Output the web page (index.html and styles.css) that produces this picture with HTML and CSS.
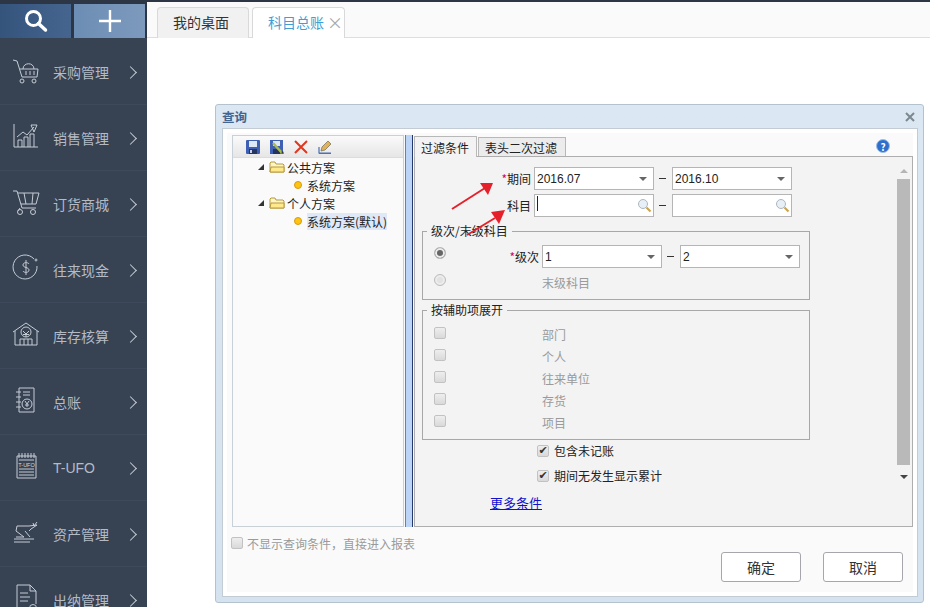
FILE: index.html
```html
<!DOCTYPE html>
<html lang="zh-CN">
<head>
  <meta charset="UTF-8" />
  <title>科目总账</title>
  <link rel="stylesheet" href="styles.css">
</head>
<body>
  <div class="app">
    <aside class="sidebar">
      <div class="quick">
        <div class="quick-btn quick-search">
          <svg width="26" height="26" viewBox="0 0 26 26"><circle cx="10.5" cy="10.5" r="7" fill="none" stroke="#fff" stroke-width="3"/><path d="M15.5 15.5l7 6.5" stroke="#fff" stroke-width="3.5" stroke-linecap="round"/></svg>
        </div>
        <div class="quick-btn quick-add">
          <svg width="24" height="24" viewBox="0 0 24 24"><path d="M12 1v22M1 12h22" stroke="#fff" stroke-width="2.4"/></svg>
        </div>
      </div>
      <ul class="menu">
        <li class="menu-item">
          <svg class="menu-icon" viewBox="0 0 28 28"><path d="M1 4l4 1 5 16h15M8 13h18l-1 8M11 13c0-7 11-7 11 0M14 15v4M18 15v4M22 15v4"/><circle cx="10" cy="25" r="2"/><circle cx="22" cy="25" r="2"/></svg>
          <span class="menu-label">采购管理</span><span class="chevron"></span>
        </li>
        <li class="menu-item">
          <svg class="menu-icon" viewBox="0 0 28 28"><path d="M2 2v23h24M6 25v-7h4v7M12 25v-10h4v10M18 25v-13h4v13M5 15l6-5 4 3 7-8M19 3h6l-3 7z"/></svg>
          <span class="menu-label">销售管理</span><span class="chevron"></span>
        </li>
        <li class="menu-item">
          <svg class="menu-icon" viewBox="0 0 28 28"><path d="M1 3h4l5 17h14M6 5h21l-3 11H9M12 5l2 11M21 5l-1 11M8 20l-2 3"/><circle cx="8" cy="24" r="2.5"/><circle cx="21" cy="24" r="2.5"/></svg>
          <span class="menu-label">订货商城</span><span class="chevron"></span>
        </li>
        <li class="menu-item">
          <svg class="menu-icon" viewBox="0 0 28 28"><path d="M22 5A12 12 0 1 0 25 12M17 10c-1-2-6-2-6 1s6 2 6 5-5 3-6 1M14 6v15"/><circle cx="24" cy="6" r="1"/></svg>
          <span class="menu-label">往来现金</span><span class="chevron"></span>
        </li>
        <li class="menu-item">
          <svg class="menu-icon" viewBox="0 0 28 28"><path d="M1 12L14 3l13 9M3 11v14h22V11M8 25v-6h12v6M12 19v6M16 19v6M11 11l3 3 3-3M14 14v3M11 14.500h6"/><circle cx="14" cy="12" r="5"/></svg>
          <span class="menu-label">库存核算</span><span class="chevron"></span>
        </li>
        <li class="menu-item">
          <svg class="menu-icon" viewBox="0 0 28 28"><path d="M7 2h15v24H7zM4 6h5M4 11h5M4 16h5M4 21h5M11 6h7M11 9h7"/><circle cx="15" cy="18" r="5"/><path d="M13 15l2 3 2-3M15 18v3M13 19h4"/></svg>
          <span class="menu-label">总账</span><span class="chevron"></span>
        </li>
        <li class="menu-item">
          <svg class="menu-icon" viewBox="0 0 28 28"><path d="M5 4h19v22H5zM7 1v5M10 1v5M13 1v5M16 1v5M19 1v5M22 1v5M7 8h15M7 17h15M7 20h15M7 23h15"/><text x="14.500" y="15" class="ufo-mark">T-UFO</text></svg>
          <span class="menu-label">T-UFO</span><span class="chevron"></span>
        </li>
        <li class="menu-item">
          <svg class="menu-icon" viewBox="0 0 28 28"><path d="M2 21h20M2 24h16M5 8h12l8-1-6 4-2 2M5 8l-1 5 8 6H4M13 13l5 6M21 5l1 3M25 4l-3 4"/></svg>
          <span class="menu-label">资产管理</span><span class="chevron"></span>
        </li>
        <li class="menu-item">
          <svg class="menu-icon" viewBox="0 0 28 28"><path d="M5 1h13l6 6v13M18 1v6h6M5 1v24h13M8 9h8M8 13h10M8 17h8"/><circle cx="21" cy="24" r="3.500"/></svg>
          <span class="menu-label">出纳管理</span><span class="chevron"></span>
        </li>
      </ul>
    </aside>

    <main class="main">
      <div class="tabs">
        <div class="tab">我的桌面</div>
        <div class="tab tab-active">科目总账<span class="tab-close">×</span></div>
      </div>
    </main>
  </div>

  <section class="dialog">
    <header class="dialog-title">
      <span>查询</span>
      <svg width="10" height="10" viewBox="0 0 10 10"><path d="M1 1l8 8M9 1l-8 8" stroke="#7d8790" stroke-width="2"/></svg>
    </header>

    <div class="dialog-inner">
      <div class="dialog-body">
        <div class="tree-panel">
          <div class="tree-tools">
            <svg width="14" height="14" viewBox="0 0 14 14"><rect width="14" height="14" rx="1" fill="#3f5fb4"/><rect x="3" y="1" width="8" height="6" fill="#dfe6f4"/><rect x="3" y="9" width="8" height="5" fill="#24345e"/><rect x="4" y="10" width="2" height="3" fill="#c7d0e4"/></svg>
            <svg width="14" height="14" viewBox="0 0 14 14"><rect width="13" height="14" fill="#3f5fb4"/><rect x="3" y="1" width="7" height="5" fill="#dfe6f4"/><rect x="3" y="9" width="7" height="5" fill="#24345e"/><path d="M3 3l9 10" stroke="#a8bb4a" stroke-width="2.500"/><path d="M11 12l3 2-1-3z" fill="#333"/></svg>
            <svg width="14" height="14" viewBox="0 0 14 14"><path d="M1 1l12 12M13 1L1 13" stroke="#e2361f" stroke-width="2"/></svg>
            <svg width="14" height="14" viewBox="0 0 14 14"><path d="M1 7v6h12" fill="none" stroke="#4a6fb0" stroke-width="1.200"/><path d="M1 13.500h12" stroke="#d8452c"/><path d="M3 11l1-4 6-6 3 3-6 6z" fill="#e0b25a" stroke="#6f6a58" stroke-width=".7"/></svg>
          </div>
          <ul class="tree">
            <li class="tree-row tree-group"><span class="tree-arrow"></span>
              <svg width="16" height="14" viewBox="0 0 16 14"><path d="M1 12V3l1-1h4l1 2h7l1 1v7z" fill="#fff6c8" stroke="#b59a3c"/><path d="M1 12l1-5h13v5z" fill="#ffe98a" stroke="#b59a3c"/></svg>
              <span class="tree-text">公共方案</span></li>
            <li class="tree-row tree-leaf"><span class="tree-dot"></span><span class="tree-text">系统方案</span></li>
            <li class="tree-row tree-group"><span class="tree-arrow"></span>
              <svg width="16" height="14" viewBox="0 0 16 14"><path d="M1 12V3l1-1h4l1 2h7l1 1v7z" fill="#fff6c8" stroke="#b59a3c"/><path d="M1 12l1-5h13v5z" fill="#ffe98a" stroke="#b59a3c"/></svg>
              <span class="tree-text">个人方案</span></li>
            <li class="tree-row tree-leaf"><span class="tree-dot"></span><span class="tree-text tree-selected">系统方案(默认)</span></li>
          </ul>
        </div>

        <div class="splitter"></div>

        <div class="filter">
          <div class="filter-tabs">
            <div class="filter-tab filter-tab-active">过滤条件</div>
            <div class="filter-tab">表头二次过滤</div>
            <span class="help">?</span>
          </div>

          <div class="filter-panel">
            <form class="filter-form">
              <div class="field-row">
                <label class="field-label"><em>*</em>期间</label>
                <div class="field">2016.07<span class="caret"></span></div>
                <span class="dash"></span>
                <div class="field">2016.10<span class="caret"></span></div>
              </div>
              <div class="field-row">
                <label class="field-label">科目</label>
                <div class="field"><span class="cursor"></span>
                  <svg class="lookup" width="15" height="15" viewBox="0 0 15 15"><circle cx="6" cy="6" r="4.500" fill="#e8f0f6" stroke="#a9b7c2"/><path d="M9.500 9.500l4 4" stroke="#c9a24a" stroke-width="2"/></svg>
                </div>
                <span class="dash"></span>
                <div class="field">
                  <svg class="lookup" width="15" height="15" viewBox="0 0 15 15"><circle cx="6" cy="6" r="4.500" fill="#e8f0f6" stroke="#a9b7c2"/><path d="M9.500 9.500l4 4" stroke="#c9a24a" stroke-width="2"/></svg>
                </div>
              </div>

              <fieldset class="group group-level">
                <legend>级次/末级科目</legend>
                <div class="level-row">
                  <span class="radio radio-on"></span>
                  <label class="level-label"><em>*</em>级次</label>
                  <div class="field">1<span class="caret"></span></div>
                  <span class="dash"></span>
                  <div class="field">2<span class="caret"></span></div>
                </div>
                <div class="level-row level-last">
                  <span class="radio"></span>
                  <span class="level-label"></span>
                  <span class="muted">末级科目</span>
                </div>
              </fieldset>

              <fieldset class="group group-aux">
                <legend>按辅助项展开</legend>
                <div class="aux-row"><span class="check"></span><span class="muted">部门</span></div>
                <div class="aux-row"><span class="check"></span><span class="muted">个人</span></div>
                <div class="aux-row"><span class="check"></span><span class="muted">往来单位</span></div>
                <div class="aux-row"><span class="check"></span><span class="muted">存货</span></div>
                <div class="aux-row"><span class="check"></span><span class="muted">项目</span></div>
              </fieldset>

              <div class="option"><span class="check check-on">✔</span>包含未记账</div>
              <div class="option"><span class="check check-on">✔</span>期间无发生显示累计</div>
              <a class="more" href="#">更多条件</a>
            </form>

            <div class="scrollbar">
              <span class="scroll-up"></span>
              <span class="scroll-thumb"></span>
              <span class="scroll-down"></span>
            </div>
          </div>
        </div>
      </div>

      <footer class="dialog-foot">
        <div class="skip"><span class="check"></span>不显示查询条件，直接进入报表</div>
        <div class="actions">
          <button class="btn" type="button">确定</button>
          <button class="btn" type="button">取消</button>
        </div>
      </footer>
    </div>

    <svg class="arrows" width="60" height="60" viewBox="0 0 60 60">
      <path d="M1 29L34 8" stroke="#e5202a" stroke-width="2"/>
      <path d="M42 3H29l8 12z" fill="#e5202a"/>
      <path d="M16 55L44 38" stroke="#e5202a" stroke-width="2"/>
      <path d="M54 30L40 32l8 12z" fill="#e5202a"/>
    </svg>
  </section>
</body>
</html>
```
FILE: styles.css
```css
* {
  box-sizing: border-box;
}

html, body {
  margin: 0;
  padding: 0;
  height: 607px;
  overflow: hidden;
  background: #fff;
  font-family: "Noto Sans CJK SC", "Liberation Sans", sans-serif;
  font-size: 12px;
  color: #222;
}

.app {
  display: flex;
  height: 607px;
  border-top: 2px solid #2c3644;
}

/* sidebar */
.sidebar {
  width: 147px;
  flex-shrink: 0;
  background: #374253;
  overflow: hidden;
}

.quick {
  display: flex;
  gap: 3px;
  height: 36px;
  padding-top: 2px;
  background: #2c3644;
}

.quick-btn {
  width: 71px;
  display: flex;
  align-items: center;
  justify-content: center;
}

.quick-search {
  background: linear-gradient(90deg, #35547c, #45658f);
}

.quick-add {
  background: linear-gradient(90deg, #6c8db4, #7d9abd);
}

.menu {
  list-style: none;
  margin: 0;
  padding: 1px 0 0;
}

.menu-item {
  height: 66px;
  display: flex;
  align-items: center;
  padding: 1px 0 0 12px;
  border-bottom: 1px solid #3e4a5c;
  color: #b4bbc5;
  font-size: 14px;
}

.menu-icon {
  width: 28px;
  height: 28px;
  margin: -4px 13px 0 0;
  fill: none;
  stroke: #c5ccd4;
  stroke-width: 1;
}

.ufo-mark {
  font-family: "Liberation Sans", sans-serif;
  font-size: 5.500px;
  fill: #d5dade;
  stroke: none;
  text-anchor: middle;
}

.menu-label {
  width: 73px;
  font-family: "Liberation Sans", "Noto Sans CJK SC", sans-serif;
}

.chevron {
  width: 9px;
  height: 9px;
  border-top: 1px solid #c5ccd4;
  border-right: 1px solid #c5ccd4;
  transform: rotate(45deg);
}

/* tabs */
.main {
  flex: 1;
}

.tabs {
  display: flex;
  gap: 3px;
  height: 36px;
  padding: 5px 0 0 10px;
  background: #fafafa;
  border-bottom: 1px solid #dedede;
  font-size: 14px;
}

.tab {
  width: 92px;
  height: 31px;
  display: flex;
  align-items: center;
  padding: 0 0 3px 15px;
  background: #f1f1f1;
  border: 1px solid #d9d9d9;
  border-bottom: none;
  border-radius: 4px 4px 0 0;
  color: #333;
}

.tab-active {
  width: 93px;
  background: #fff;
  color: #3d9fd6;
}

.tab-close {
  margin-left: 3px;
  color: #a8a8a8;
  font-size: 16px;
  line-height: 1;
}

/* dialog */
.dialog {
  position: absolute;
  left: 215px;
  top: 104px;
  width: 709px;
  height: 499px;
  display: flex;
  flex-direction: column;
  padding: 0 5px 5px 6px;
  background: linear-gradient(#dbe7f2, #d5e3f0);
  border: 1px solid #b4c2ce;
  border-radius: 3px;
}

.dialog-title {
  height: 23px;
  flex-shrink: 0;
  display: flex;
  align-items: center;
  justify-content: space-between;
  padding-right: 3px;
  color: #3f6590;
  font-size: 12.500px;
  font-weight: 700;
}

.dialog-inner {
  flex: 1;
  display: flex;
  flex-direction: column;
  padding: 6px 4px 0 9px;
  background: #fafafa;
  border: 1px solid #c3ccd4;
  box-shadow: inset 0 0 0 4px #fff;
}

.dialog-body {
  display: flex;
  height: 392px;
}

/* tree */
.tree-panel {
  width: 172px;
  flex-shrink: 0;
  background: #fafafa;
  border: 1px solid #c9d1d8;
}

.tree-tools {
  height: 22px;
  display: flex;
  align-items: center;
  gap: 10px;
  padding-left: 13px;
  background: linear-gradient(#fafafa, #e6e6e6);
  border-bottom: 1px solid #dcdcdc;
}

.tree {
  list-style: none;
  margin: 0;
  padding: 0;
}

.tree-row {
  display: flex;
  align-items: center;
  height: 18px;
  color: #222;
}

.tree-group {
  padding-left: 25px;
}

.tree-arrow {
  width: 0;
  height: 0;
  margin-right: 5px;
  border-left: 6px solid transparent;
  border-bottom: 6px solid #333;
}

.tree-group .tree-text {
  margin-left: 2px;
}

.tree-leaf {
  padding-left: 61px;
}

.tree-dot {
  width: 8px;
  height: 8px;
  margin-right: 5px;
  border-radius: 50%;
  background: #fdc412;
  border: 1px solid #d79a10;
}

.tree-selected {
  background: #dfe8f6;
}

.splitter {
  width: 8px;
  margin: 0 1px;
  background: #bcd4f5;
  border-left: 1px solid #5c7fc8;
  border-right: 1px solid #24386e;
}

/* filter */
.filter {
  flex: 1;
  display: flex;
  flex-direction: column;
}

.filter-tabs {
  height: 21px;
  display: flex;
  align-items: flex-end;
  position: relative;
}

.filter-tab {
  height: 19px;
  padding: 0 8px 0 6px;
  display: flex;
  align-items: center;
  margin-left: 1px;
  background: #ececec;
  border: 1px solid #b8b8b8;
  border-bottom: none;
}

.filter-tab-active {
  height: 21px;
  padding: 0 7px 0 6px;
  margin: 0 0 -1px;
  background: #f3f3f3;
  position: relative;
  z-index: 1;
}

.help {
  position: absolute;
  left: 462px;
  top: 4px;
  width: 14px;
  height: 14px;
  display: flex;
  align-items: center;
  justify-content: center;
  border-radius: 50%;
  background: #2f6fcb;
  border: 1px solid #9cc0ea;
  color: #fff;
  font-size: 10px;
  font-weight: 700;
}

.filter-panel {
  flex: 1;
  display: flex;
  background: #f3f3f3;
  border: 1px solid #aeaeae;
}

.filter-form {
  flex: 1;
  padding: 10px 0 0;
}

.field-row {
  display: flex;
  align-items: center;
  margin-bottom: 4px;
}

.field-label {
  width: 116px;
  margin-right: 3px;
  text-align: right;
}

em {
  font-style: normal;
  color: #c8104f;
}

.field {
  width: 120px;
  height: 23px;
  display: flex;
  align-items: center;
  padding-left: 2px;
  position: relative;
  background: #fff;
  border: 1px solid #b5b5b5;
  font-family: "Liberation Sans", sans-serif;
}

.caret {
  position: absolute;
  right: 6px;
  top: 9px;
  border-left: 4px solid transparent;
  border-right: 4px solid transparent;
  border-top: 4px solid #666;
}

.cursor {
  width: 1px;
  height: 15px;
  margin-top: -4px;
  background: #222;
}

.lookup {
  position: absolute;
  right: 1px;
  top: 3px;
}

.dash {
  width: 7px;
  height: 1px;
  margin: 0 6px 0 5px;
  background: #333;
}

.group {
  width: 388px;
  margin: 7px 0 0 7px;
  padding: 0;
  background: transparent;
  border: 1px solid #a8a8a8;
}

.group legend {
  margin-left: 4px;
  padding: 0 4px;
  line-height: 14px;
}

.level-row {
  display: flex;
  align-items: center;
  margin-top: 7px;
}

.level-last {
  align-items: flex-start;
  margin-top: 3px;
  height: 28px;
}

.level-last .radio {
  margin-top: 3px;
}

.level-last .muted {
  margin-top: 5px;
  line-height: 14px;
}

.radio {
  width: 12px;
  height: 12px;
  margin-left: 11px;
  border-radius: 50%;
  background: #e2e2e2;
  border: 1px solid #bdbdbd;
  box-shadow: inset 0 0 0 2px #ececec;
}

.radio-on {
  background: #666;
  margin-top: -7px;
}

.level-label {
  width: 93px;
  margin-right: 3px;
  text-align: right;
}

.muted {
  color: #9a9a9a;
}

.group-aux {
  height: 137px;
  margin-top: 3px;
  margin-bottom: -2px;
  padding-top: 10px;
}

.aux-row {
  display: flex;
  height: 22px;
  padding-left: 11px;
}

.aux-row .muted {
  margin: 1px 0 0 96px;
  line-height: 14px;
}

.check {
  width: 12px;
  height: 12px;
  flex-shrink: 0;
  display: inline-flex;
  align-items: center;
  justify-content: center;
  background: linear-gradient(#eeeeee, #d9d9d9);
  border: 1px solid #c2c2c2;
  border-radius: 2px;
  font-family: "DejaVu Sans", sans-serif;
  font-size: 11px;
  color: #333;
}

.option {
  display: flex;
  align-items: center;
  gap: 5px;
  height: 25px;
  padding-left: 122px;
}

.more {
  display: block;
  margin: 5px 0 0 75px;
  color: #1111cc;
  font-size: 13px;
}

.scrollbar {
  width: 13px;
  margin: 12px 2px 0 0;
  display: flex;
  flex-direction: column;
  align-items: center;
}

.scroll-up {
  border-left: 4px solid transparent;
  border-right: 4px solid transparent;
  border-bottom: 4px solid #b5b5b5;
}

.scroll-thumb {
  width: 13px;
  height: 286px;
  margin: 6px 0 10px;
  background: #b9b9b9;
}

.scroll-down {
  border-left: 4px solid transparent;
  border-right: 4px solid transparent;
  border-top: 4px solid #444;
}

/* footer */
.dialog-foot {
  display: flex;
  justify-content: space-between;
  padding: 9px 10px 0 0;
}

.skip {
  display: flex;
  align-items: center;
  gap: 4px;
  height: 14px;
  margin-left: -1px;
  color: #9a9a9a;
}

.actions {
  display: flex;
  gap: 22px;
  margin-top: 16px;
}

.btn {
  width: 80px;
  height: 30px;
  background: #fff;
  border: 1px solid #a6a6ac;
  border-radius: 3px;
  color: #333;
  font-family: inherit;
  font-size: 14px;
}

/* annotation arrows */
.arrows {
  position: absolute;
  left: 235px;
  top: 75px;
}
```
